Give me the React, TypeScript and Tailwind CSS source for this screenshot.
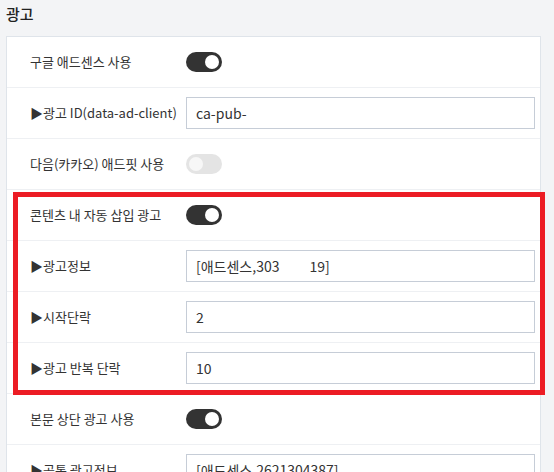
import React from "react";

type Row =
  | { kind: "toggle"; label: string; on: boolean }
  | { kind: "input"; label: string; value: React.ReactNode };

const rows: Row[] = [
  { kind: "toggle", label: "구글 애드센스 사용", on: true },
  { kind: "input", label: "▶광고 ID(data-ad-client)", value: "ca-pub-" },
  { kind: "toggle", label: "다음(카카오) 애드핏 사용", on: false },
  { kind: "toggle", label: "콘텐츠 내 자동 삽입 광고", on: true },
  {
    kind: "input",
    label: "▶광고정보",
    value: (
      <>
        [애드센스,303<span className="inline-block w-[30px]" />19]
      </>
    ),
  },
  { kind: "input", label: "▶시작단락", value: "2" },
  { kind: "input", label: "▶광고 반복 단락", value: "10" },
  { kind: "toggle", label: "본문 상단 광고 사용", on: true },
  { kind: "input", label: "▶공통 광고정보", value: "[애드센스,2621304387]" },
];

function Toggle({ on }: { on: boolean }) {
  return (
    <div
      className={`flex h-5 w-9 items-center rounded-full px-[3px] ${
        on ? "justify-end bg-[#333333]" : "justify-start bg-[#e4e4e4]"
      }`}
    >
      <div className={`h-[14px] w-[14px] rounded-full ${on ? "bg-white" : "bg-[#f7f7f7]"}`} />
    </div>
  );
}

export default function App() {
  return (
    <div
      className="h-[472px] w-[554px] overflow-hidden bg-[#f3f4f6] text-[#333]"
      style={{ fontFamily: '"Noto Sans CJK KR", "Noto Sans", sans-serif' }}
    >
      <h2 className="pl-[6px] pt-[3px] text-[15px] font-medium leading-[22px] text-[#222]">광고</h2>
      <div className="relative ml-[6px] mt-[11px] w-[535px] border border-[#dfe4ea] bg-white">
        {rows.map((r, i) => (
          <div
            key={i}
            className={`flex items-center pl-[23px] pr-[5px] ${
              i > 0 ? "h-[51px] border-t border-[#eef0f3]" : "h-[50px]"
            }`}
          >
            <div className="w-[156px] shrink-0 text-[13px]">{r.label}</div>
            {r.kind === "toggle" ? (
              <Toggle on={r.on} />
            ) : (
              <div className="flex h-[32px] w-[349px] items-center border border-[#c6cdd7] pl-[9px] text-[14px] text-[#333]">
                {r.value}
              </div>
            )}
          </div>
        ))}
        <div className="pointer-events-none absolute left-[6px] top-[155px] h-[203px] w-[532px] border-[5px] border-[#ec1c24]" />
      </div>
    </div>
  );
}
